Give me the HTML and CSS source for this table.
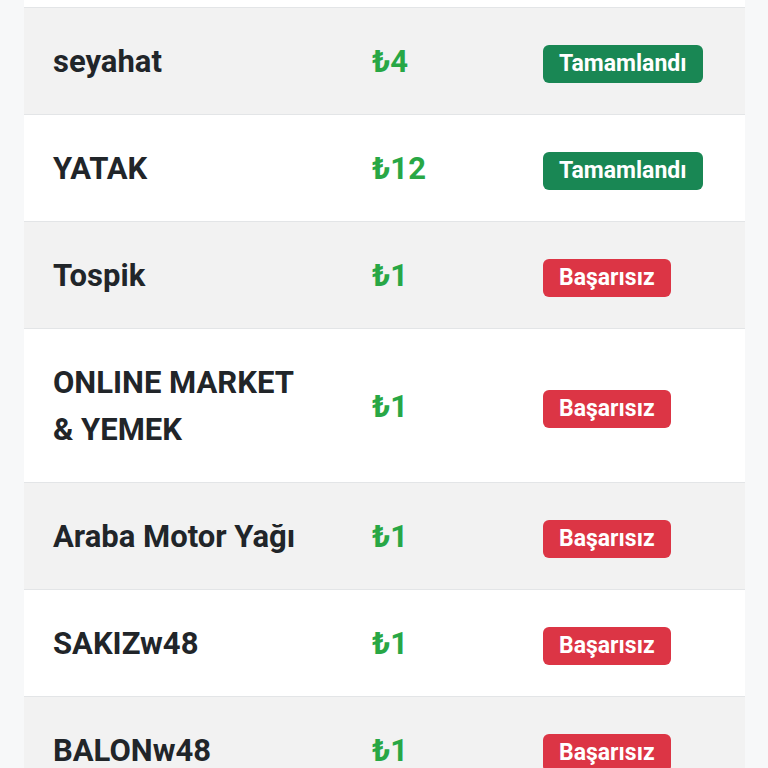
FILE: index.html
```html
<!DOCTYPE html>
<html lang="tr">
<head>
<meta charset="utf-8">
<link rel="stylesheet" href="styles.css">
</head>
<body>
<div class="table">
  <div class="tail"></div>
  <div class="row odd">
    <div class="name">seyahat</div>
    <div class="amount">₺4</div>
    <div class="status"><span class="badge ok">Tamamlandı</span></div>
  </div>
  <div class="row">
    <div class="name">YATAK</div>
    <div class="amount">₺12</div>
    <div class="status"><span class="badge ok">Tamamlandı</span></div>
  </div>
  <div class="row odd">
    <div class="name">Tospik</div>
    <div class="amount">₺1</div>
    <div class="status"><span class="badge fail">Başarısız</span></div>
  </div>
  <div class="row">
    <div class="name">ONLINE MARKET &amp; YEMEK</div>
    <div class="amount">₺1</div>
    <div class="status"><span class="badge fail">Başarısız</span></div>
  </div>
  <div class="row odd">
    <div class="name">Araba Motor Yağı</div>
    <div class="amount">₺1</div>
    <div class="status"><span class="badge fail">Başarısız</span></div>
  </div>
  <div class="row">
    <div class="name">SAKIZw48</div>
    <div class="amount">₺1</div>
    <div class="status"><span class="badge fail">Başarısız</span></div>
  </div>
  <div class="row odd">
    <div class="name">BALONw48</div>
    <div class="amount">₺1</div>
    <div class="status"><span class="badge fail">Başarısız</span></div>
  </div>
</div>
</body>
</html>
```
FILE: styles.css
```css
html, body {
  margin: 0;
  padding: 0;
  background: #f7f8f9;
  font-family: Roboto, "Liberation Sans", sans-serif;
  overflow: hidden;
  height: 768px;
}
.table {
  margin: 0 23px 0 24px;
  background: #fff;
}
.tail {
  height: 7px;
  border-bottom: 1px solid #e3e5e7;
}
.row {
  display: grid;
  grid-template-columns: 319px 171px 1fr;
  align-items: center;
  border-bottom: 1px solid #e3e5e7;
  background: #fff;
}
.row.odd {
  background: #f2f2f2;
}
.row > div {
  padding: 30px 29px 29px;
  line-height: 47px;
}
.name {
  font-size: 31px;
  font-weight: 700;
  color: #212529;
}
.amount {
  font-size: 31px;
  font-weight: 700;
  color: #28a745;
}
.status {
  display: flex;
  align-items: center;
}
.badge {
  display: inline-block;
  margin-top: 5px;
  height: 38px;
  line-height: 38px;
  padding: 0 16px;
  border-radius: 6px;
  color: #fff;
  font-size: 23px;
  font-weight: 700;
}
.ok { background: #198754; }
.fail { background: #dc3545; }
```
